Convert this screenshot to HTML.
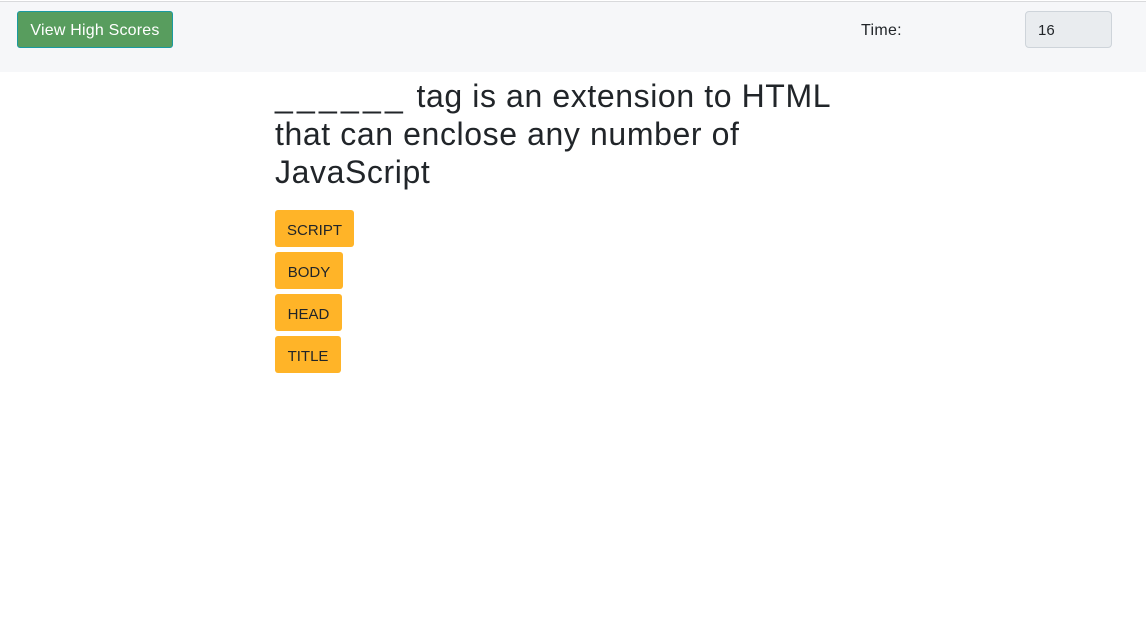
<!DOCTYPE html>
<html><head><style>
body{margin:0;background:#fff;font-family:"Liberation Sans",sans-serif;color:#212529;width:1146px;height:623px;overflow:hidden;position:relative}
.nav{position:absolute;top:1px;left:0;width:1146px;height:70px;background:#f6f7f9;border-top:1px solid #d9dadc}
.hs{position:absolute;left:17px;top:9px;width:154px;height:35px;background:#589d5e;border:1px solid #1a9aa0;border-radius:3px;color:#fff;font-size:16px;line-height:37px;text-align:center;letter-spacing:0.2px}
.time{position:absolute;left:861px;top:20px;font-size:16px;letter-spacing:0.3px}
.inp{position:absolute;left:1025px;top:9px;background:#e9ecef;border:1px solid #ced4da;border-radius:4px;font-size:15px;line-height:37px;padding-left:12px;box-sizing:border-box;width:87px;height:37px}
h1{position:absolute;left:275px;top:77px;margin:0;font-weight:400;font-size:32px;line-height:38px;letter-spacing:0.6px;white-space:nowrap}
.u{letter-spacing:4.2px}
.b{position:absolute;left:275px;height:37px;background:#ffb428;border-radius:3px;font-size:15px;line-height:41px;text-align:center}
</style></head><body>
<div class="nav">
<div class="hs">View High Scores</div>
<div class="time">Time:</div>
<div class="inp">16</div>
</div>
<h1><span class="u">______</span> tag is an extension to HTML<br>that can enclose any number of<br>JavaScript</h1>
<div class="b" style="top:210px;width:79px">SCRIPT</div>
<div class="b" style="top:252px;width:68px">BODY</div>
<div class="b" style="top:294px;width:67px">HEAD</div>
<div class="b" style="top:336px;width:66px">TITLE</div>
</body></html>
